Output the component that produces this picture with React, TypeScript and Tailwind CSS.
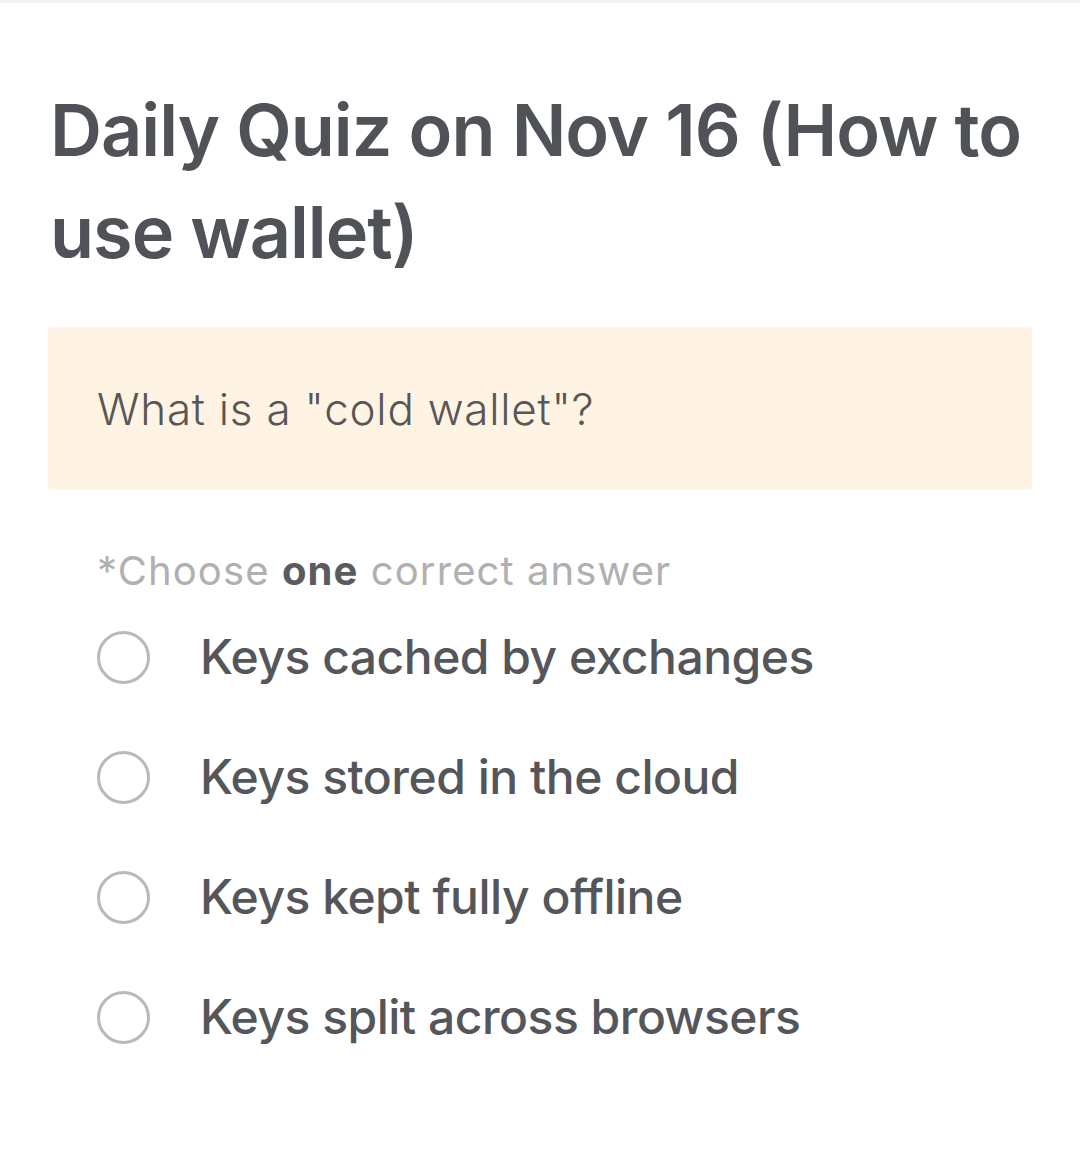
import { useState } from 'react'

const options = [
  'Keys cached by exchanges',
  'Keys stored in the cloud',
  'Keys kept fully offline',
  'Keys split across browsers',
]

export default function App() {
  const [picked, setPicked] = useState<number | null>(null)

  return (
    <div className="min-h-[1156px] bg-white border-t-[3px] border-[#f3f3f3] font-['Inter',sans-serif]">
      <div className="px-[48px] pt-[76px]">
        <h1 className="pl-[2px] text-[72px] leading-[102px] font-semibold tracking-[-1px] text-[#4f5257]">
          Daily Quiz on Nov 16 (How to use wallet)
        </h1>

        <div className="mt-[44px] h-[163px] rounded-[4px] bg-[#fff4e3] flex items-center px-[49px]">
          <p className="text-[44px] font-light text-[#595656] tracking-[0.75px]">What is a "cold wallet"?</p>
        </div>

        <p className="mt-[51px] pl-[49px] text-[40px] text-[#b0b0b0] tracking-[1.1px]">
          *Choose <span className="font-bold text-[#5a5b5e]">one</span> correct answer
        </p>

        <ul className="mt-[20px] flex flex-col gap-[48px] pl-[49px]">
          {options.map((opt, i) => (
            <li key={opt}>
              <button
                type="button"
                onClick={() => setPicked(i)}
                className="flex items-center gap-[50px] h-[72px]"
              >
                <span className="w-[53px] h-[53px] rounded-full border-[3px] border-[#b9b9b9] flex items-center justify-center shrink-0">
                  {picked === i && <span className="w-[27px] h-[27px] rounded-full bg-[#5a5b5e]" />}
                </span>
                <span className="text-[48px] font-medium text-[#54565a] tracking-[-0.5px]">{opt}</span>
              </button>
            </li>
          ))}
        </ul>
      </div>
    </div>
  )
}
